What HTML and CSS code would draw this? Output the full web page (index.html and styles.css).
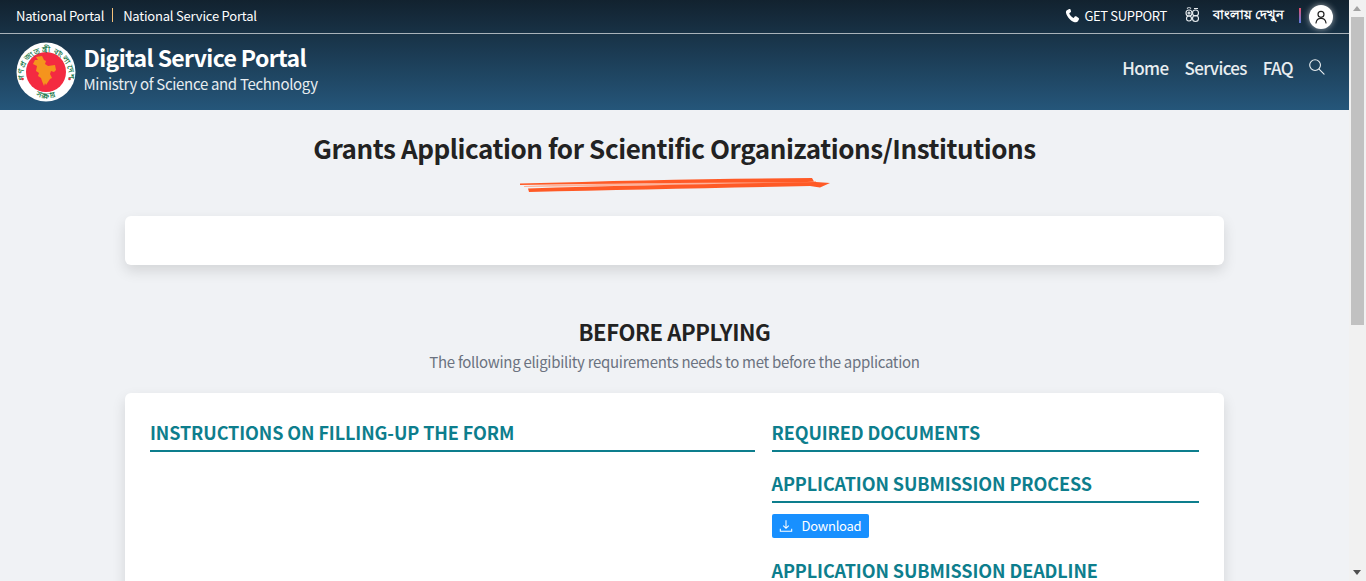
FILE: index.html
```html
<!DOCTYPE html>
<html lang="en">
<head>
    <meta charset="UTF-8">
    <meta name="viewport" content="width=device-width, initial-scale=1.0">
    <title>Digital Service Portal</title>
    <link rel="stylesheet" href="styles.css">
</head>
<body>
    <header class="site-header">
        <div class="topbar">
            <div class="topbar-links">
                <a href="#">National Portal</a>
                <span class="topbar-sep"></span>
                <a href="#">National Service Portal</a>
            </div>
            <div class="topbar-tools">
                <a href="#" class="support">
                    <svg class="support-icon" viewBox="0 0 24 24"><path fill="#fff" d="M6.600 1.600 3 3.400C1.600 4.200 1.200 6 1.800 8.200c1.600 6 7.600 12.600 13.600 14.400 2.200.6 4.200.2 5.200-1.200l1.800-3.200c.4-.8.200-1.600-.6-2.200l-4-2.600c-.8-.4-1.600-.4-2.200.4l-1.400 1.800c-.4.400-.8.400-1.200.2-2.600-1.400-4.800-3.800-6-6.400-.2-.4-.2-.8.200-1.200l1.800-1.400c.8-.6.800-1.400.4-2.200L8.800 2.200C8.200 1.400 7.400 1.200 6.600 1.600Z"/></svg>
                    GET SUPPORT
                </a>
                <svg class="lang-icon" viewBox="0 0 16 16" fill="none" stroke="#e8edf0" stroke-width="1.100"><circle cx="5" cy="6" r="3"/><circle cx="11.500" cy="6" r="3"/><circle cx="5" cy="6" r="1"/><circle cx="11.500" cy="11.500" r="3"/><circle cx="5" cy="11.500" r="2.500"/><path d="M3 1.500c1-1 3-1 4 0M10 1.500h4"/></svg>
                <a href="#" class="lang-link" lang="bn">বাংলায় দেখুন</a>
                <span class="tools-sep"></span>
                <a href="#" class="user-btn">
                    <svg viewBox="0 0 24 24" fill="none" stroke="#222" stroke-width="1.800" stroke-linecap="round"><circle cx="12" cy="8" r="4.500"/><path d="M4.500 21c.6-4.600 3.600-7 7.500-7s6.900 2.400 7.500 7"/></svg>
                </a>
            </div>
        </div>
        <div class="mainbar">
            <a href="#" class="brand">
                <svg class="brand-logo" viewBox="0 0 60 60">
                    <defs>
                        <path id="logo-top" d="M9 41A22.500 22.500 0 1 1 51 41"/>
                        <path id="logo-bottom" d="M17 53Q30 60 43 53"/>
                    </defs>
                    <circle cx="30" cy="30" r="29.500" fill="#fff"/>
                    <circle cx="30" cy="30" r="20" fill="#f42a41"/>
                    <text class="logo-text" lang="bn" text-anchor="middle"><textPath href="#logo-top" startOffset="50%">গণপ্রজাতন্ত্রী বাংলাদেশ</textPath></text>
                    <text class="logo-text logo-text-bottom" lang="bn" text-anchor="middle"><textPath href="#logo-bottom" startOffset="50%">সরকার</textPath></text>
                    <path fill="#f5941d" d="M20 15l6-1 2 4 2 1-1 3 3 2 7-1 1 5-2 2-3-1-1 3 2 4-2 1-2 3-2 3-1-2-1 3-2-5-1-3-3-2 1-3-3-2 1-5-4-2 2-4 3 0z"/>
                    <circle cx="6.500" cy="37" r="1.300" fill="#e03040"/>
                    <circle cx="53.500" cy="37" r="1.300" fill="#e03040"/>
                </svg>
                <div class="brand-text">
                    <div class="brand-name">Digital Service Portal</div>
                    <div class="brand-sub">Ministry of Science and Technology</div>
                </div>
            </a>
            <nav class="main-nav">
                <a href="#">Home</a>
                <a href="#">Services</a>
                <a href="#">FAQ</a>
                <svg class="search-icon" viewBox="0 0 18 18" fill="none" stroke="#e8edf0" stroke-width="1.200" stroke-linecap="round"><circle cx="7.500" cy="7.500" r="5.700"/><path d="m11.700 11.700 5.300 5.300"/></svg>
            </nav>
        </div>
    </header>

    <main class="page">
        <h1 class="page-title">Grants Application for Scientific Organizations/Institutions</h1>
        <svg class="scribble" viewBox="0 0 310 14">
            <path fill="#ffb199" d="M4 8C100 5 200 4 296 3L296 6C200 6 100 8 4 9Z"/>
            <path fill="#ff5a26" d="M0 5.500C100 2.500 200 .5 292 0L294 3.500 280 4.500C200 4.500 100 5.500 0 7Z"/>
            <path fill="#ff5a26" d="M8 10.500 9 14C100 12 200 10 290 8L300 9.500 310 5 296 4C200 6 100 7.500 8 10.500Z"/>
        </svg>

        <div class="card card-empty"></div>

        <h2 class="section-title">BEFORE APPLYING</h2>
        <p class="section-sub">The following eligibility requirements needs to met before the application</p>

        <div class="card card-info">
            <div class="info-left">
                <h3 class="info-heading">INSTRUCTIONS ON FILLING-UP THE FORM</h3>
            </div>
            <div class="info-right">
                <div class="info-block">
                    <h3 class="info-heading">REQUIRED DOCUMENTS</h3>
                </div>
                <div class="info-block">
                    <h3 class="info-heading">APPLICATION SUBMISSION PROCESS</h3>
                    <a href="#" class="download-btn">
                        <svg viewBox="0 0 16 16" fill="none" stroke="#fff" stroke-width="1.200"><path d="M8 1.500v9M4.800 7.500 8 10.700l3.200-3.200M1.500 11v3h13v-3"/></svg>
                        Download
                    </a>
                </div>
                <div class="info-block">
                    <h3 class="info-heading">APPLICATION SUBMISSION DEADLINE</h3>
                </div>
            </div>
        </div>
    </main>

    <div class="scrollbar">
        <span class="arrow-up"></span>
        <span class="scroll-thumb"></span>
        <span class="arrow-down"></span>
    </div>
</body>
</html>
```

FILE: styles.css
```css
* {
    box-sizing: border-box;
}
html {
    overflow: hidden;
}
body {
    margin: 0;
    padding-right: 17px;
    font-family: "Noto Sans CJK SC", "Noto Sans", sans-serif;
    background-color: #f0f2f5;
    color: #222;
}
a {
    color: inherit;
    text-decoration: none;
}
.site-header {
    height: 110px;
    background: linear-gradient(180deg, #12222f 0%, #25567a 100%);
    color: #fff;
}
.topbar {
    height: 34px;
    padding: 0 16px 3px;
    display: flex;
    align-items: center;
    justify-content: space-between;
    border-bottom: 1px solid #a9b3ba;
    font-size: 13px;
    letter-spacing: -0.2px;
}
.topbar-links {
    display: flex;
    align-items: center;
}
.topbar-sep {
    width: 1px;
    height: 14px;
    margin: 0 10px 0 8px;
    background: #f5c27a;
}
.topbar-tools {
    display: flex;
    align-items: center;
}
.support {
    display: flex;
    align-items: center;
    gap: 4px;
    letter-spacing: -0.35px;
}
.support-icon {
    width: 15px;
    height: 15px;
}
.lang-icon {
    width: 16px;
    height: 16px;
    margin-left: 17px;
}
.lang-link {
    margin-left: 13px;
    font-size: 13.300px;
    font-weight: 600;
    letter-spacing: 0;
}
.tools-sep {
    width: 2px;
    height: 15px;
    margin-left: 15px;
    background: linear-gradient(180deg, #e8506a, #5a7be0);
}
.user-btn {
    width: 24px;
    height: 24px;
    margin: 3px 0 0 8px;
    padding: 4px;
    border-radius: 50%;
    background: #fff;
    box-shadow: 0 0 6px rgba(255, 255, 255, 0.6);
}
.user-btn svg {
    display: block;
}
.mainbar {
    height: 76px;
    padding: 0 24px 0 16px;
    display: flex;
    align-items: center;
    justify-content: space-between;
}
.brand {
    display: flex;
    align-items: center;
    gap: 7.500px;
}
.brand-logo {
    width: 60px;
    height: 60px;
}
.logo-text {
    font-size: 7.500px;
    font-weight: 700;
    letter-spacing: 0.9px;
    fill: #1c7a4c;
}
.logo-text-bottom {
    letter-spacing: 0;
}
.brand-text {
    padding-bottom: 5px;
}
.brand-name {
    font-size: 23px;
    font-weight: 700;
    line-height: 28px;
    letter-spacing: -0.65px;
}
.brand-sub {
    margin-top: 1px;
    font-size: 15px;
    line-height: 24px;
    letter-spacing: -0.32px;
    color: #e8edf0;
}
.main-nav {
    display: flex;
    align-items: center;
    gap: 16px;
    padding-bottom: 10px;
    font-size: 17px;
    letter-spacing: -0.65px;
    font-weight: 500;
    color: #e8edf0;
}
.search-icon {
    width: 17px;
    height: 17px;
    margin: 0 0 2px -1px;
}
.page {
    width: 1099px;
    height: 922px;
    margin: 0 auto;
    padding-top: 20px;
    display: flex;
    flex-direction: column;
    align-items: center;
}
.page-title {
    margin: 0;
    font-size: 26px;
    font-weight: 600;
    line-height: 36px;
    letter-spacing: -0.43px;
    color: #222;
}
.scribble {
    flex: none;
    width: 310px;
    height: 14px;
    margin-top: 12px;
}
.card {
    flex: none;
    width: 100%;
    background: #fff;
    border-radius: 6px;
    box-shadow: 0 6px 14px rgba(0, 0, 0, 0.12);
}
.card-empty {
    height: 49px;
    margin-top: 24px;
}
.section-title {
    margin: 49px 0 0;
    font-size: 22px;
    font-weight: 600;
    line-height: 34px;
    letter-spacing: -0.4px;
}
.section-sub {
    margin: 2px 0 0;
    font-size: 15px;
    line-height: 24px;
    letter-spacing: -0.3px;
    color: #6b7280;
}
.card-info {
    margin-top: 19px;
    height: 600px;
    padding: 26px 25px;
    display: flex;
    gap: 16.500px;
}
.info-left {
    width: 605px;
}
.info-right {
    flex: 1;
}
.info-block {
    margin-bottom: 18px;
}
.info-heading {
    margin: 0;
    padding-bottom: 5px;
    font-size: 18px;
    font-weight: 600;
    line-height: 26px;
    letter-spacing: -0.1px;
    color: #0d7e8d;
    border-bottom: 2px solid #0d7e8d;
}
.download-btn {
    display: inline-flex;
    align-items: center;
    gap: 9px;
    height: 24px;
    margin: 11px 0 1px;
    padding: 0 8px 1px 7px;
    vertical-align: top;
    background: #1890ff;
    border-radius: 2px;
    color: #fff;
    font-size: 13px;
    letter-spacing: -0.25px;
}
.download-btn svg {
    width: 14px;
    height: 14px;
}
.scrollbar {
    position: fixed;
    top: 0;
    right: 0;
    bottom: 0;
    width: 17px;
    background: #f1f1f1;
}
.scroll-thumb {
    position: absolute;
    top: 17px;
    left: 2px;
    width: 13px;
    height: 308px;
    background: #c1c1c1;
}
.arrow-up,
.arrow-down {
    position: absolute;
    left: 4px;
    width: 0;
    height: 0;
    border-left: 4.500px solid transparent;
    border-right: 4.500px solid transparent;
}
.arrow-up {
    top: 6px;
    border-bottom: 5px solid #a3a3a3;
}
.arrow-down {
    bottom: 6px;
    border-top: 5px solid #505050;
}
```
